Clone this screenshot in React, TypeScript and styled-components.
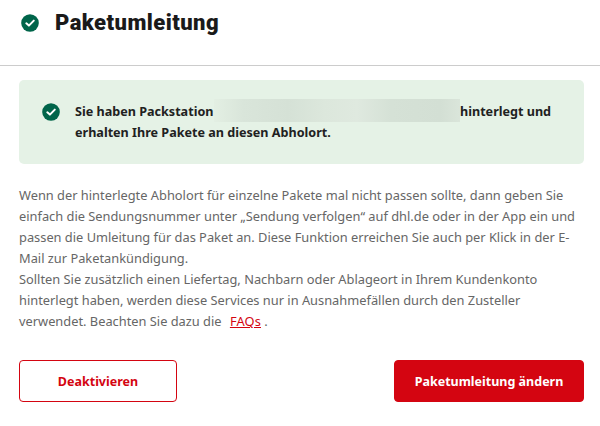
import React from 'react';
import styled, { createGlobalStyle } from 'styled-components';

const GlobalStyle = createGlobalStyle`
  html, body {
    margin: 0;
    padding: 0;
    background: #fff;
    font-family: "Noto Sans", "Open Sans", sans-serif;
  }
`;

const CheckIcon = ({ className }: { className?: string }) => (
  <svg className={className} viewBox="0 0 18 18" width="18" height="18" aria-hidden="true">
    <circle cx="9" cy="9" r="8.8" fill="#00654a" />
    <path d="M5.3 9.3l2.6 2.3 4.9-5" fill="none" stroke="#fff" strokeWidth="2" strokeLinecap="round" strokeLinejoin="round" />
  </svg>
);

export default function App() {
  return (
    <Page>
      <GlobalStyle />
      <Header>
        <CheckIcon />
        <Title>Paketumleitung</Title>
      </Header>
      <Content>
        <Notice>
          <NoticeIcon />
          <NoticeText>
            Sie haben Packstation <Redacted /> hinterlegt und
            <br />
            erhalten Ihre Pakete an diesen Abholort.
          </NoticeText>
        </Notice>
        <Body>
          Wenn der hinterlegte Abholort für einzelne Pakete mal nicht passen sollte, dann geben Sie
          einfach die Sendungsnummer unter „Sendung verfolgen“ auf dhl.de oder in der App ein und
          passen die Umleitung für das Paket an. Diese Funktion erreichen Sie auch per Klick in der E-Mail
          zur Paketankündigung.
          <br />
          Sollten Sie zusätzlich einen Liefertag, Nachbarn oder Ablageort in Ihrem Kundenkonto
          hinterlegt haben, werden diese Services nur in Ausnahmefällen durch den Zusteller
          verwendet. Beachten Sie dazu die <FaqLink href="#">FAQs</FaqLink> .
        </Body>
        <Actions>
          <SecondaryButton>Deaktivieren</SecondaryButton>
          <PrimaryButton>Paketumleitung ändern</PrimaryButton>
        </Actions>
      </Content>
    </Page>
  );
}

const Page = styled.div`
  width: 600px;
  height: 426px;
  overflow: hidden;
  background: #fff;
`;

const Header = styled.header`
  display: flex;
  align-items: center;
  gap: 16px;
  height: 66px;
  box-sizing: border-box;
  padding: 0 0 19px 21px;
  border-bottom: 1px solid #cccccc;
`;

const Title = styled.h1`
  margin: 0;
  font-family: Roboto, "Noto Sans", sans-serif;
  font-size: 22px;
  line-height: 28px;
  font-weight: 900;
  letter-spacing: 0.45px;
  color: #1a1a1a;
`;

const Content = styled.div`
  padding: 14px 16px 0 19px;
`;

const Notice = styled.div`
  display: flex;
  align-items: flex-start;
  gap: 15px;
  height: 84px;
  box-sizing: border-box;
  padding: 20px 23px;
  background: #e5f2e6;
  border-radius: 5px;
`;

const NoticeIcon = styled(CheckIcon)`
  flex: none;
  margin-top: 3px;
`;

const NoticeText = styled.p`
  margin: -1px 0 0;
  white-space: nowrap;
  font-size: 12.6px;
  line-height: 21px;
  font-weight: 700;
  color: #212121;
`;

const Redacted = styled.span`
  display: inline-block;
  width: 246px;
  height: 23px;
  margin: 0 -3px;
  vertical-align: -6px;
  background: linear-gradient(
    90deg,
    #e3efe3 0,
    #d9e5da 12%,
    #d5e1d6 30%,
    #dce7dc 45%,
    #dfe9df 58%,
    #d5e1d6 72%,
    #d3dfd4 92%,
    #dae5da 100%
  );
`;

const Body = styled.p`
  margin: 21px 0 0;
  font-size: 12.83px;
  line-height: 21px;
  color: #666666;
`;

const FaqLink = styled.a`
  margin-left: 5px;
  color: #d40511;
  text-decoration: underline;
  letter-spacing: 0.15px;
`;

const Actions = styled.div`
  display: flex;
  justify-content: space-between;
  margin-top: 28px;
`;

const BaseButton = styled.button`
  height: 42px;
  padding: 0;
  box-sizing: border-box;
  border-radius: 4px;
  font-family: inherit;
  font-size: 12.5px;
  font-weight: 700;
`;

const SecondaryButton = styled(BaseButton)`
  width: 158px;
  background: #fff;
  border: 1px solid #d40511;
  color: #d40511;
`;

const PrimaryButton = styled(BaseButton)`
  width: 190px;
  background: #d40511;
  border: 1px solid #d40511;
  color: #fff;
`;
